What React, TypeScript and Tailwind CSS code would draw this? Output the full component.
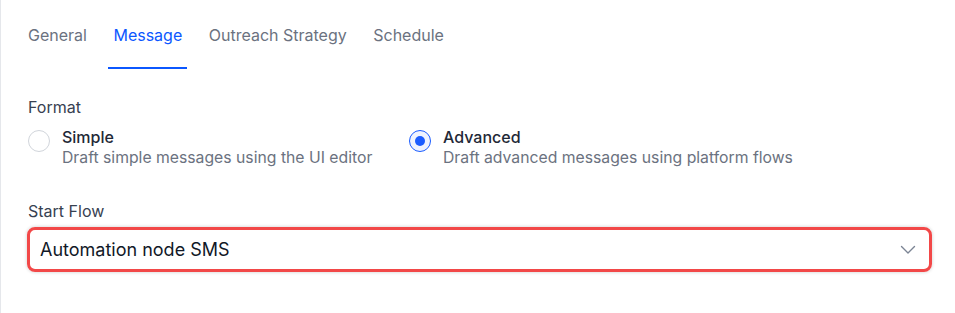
import React from "react";

const font = { fontFamily: "Inter, 'Noto Sans', sans-serif" };

export default function App() {
  const tabs = ["General", "Message", "Outreach Strategy", "Schedule"];
  return (
    <div
      className="w-[955px] h-[313px] bg-white border-l border-gray-200 pl-[27px] pr-[23px] overflow-hidden"
      style={font}
    >
      <div className="flex gap-[16.5px] -ml-[5px]">
        {tabs.map((t) => (
          <div
            key={t}
            className={
              t === "Message"
                ? "px-[5px] pt-[25px] pb-[22px] border-b-2 border-[#0b57ff] text-[#0b57ff] text-[16px] leading-5"
                : "px-[5px] pt-[25px] pb-[22px] border-b-2 border-transparent text-[#6b7280] text-[16px] leading-5"
            }
          >
            {t}
          </div>
        ))}
      </div>

      <div className="mt-[28px] text-[16px] leading-5 text-[#374151]">Format</div>

      <div className="flex mt-[10px]">
        <div className="w-[381px] flex gap-3">
          <div className="mt-[3px] w-[22px] h-[22px] rounded-full border border-[#d1d5db] bg-white shrink-0" />
          <div>
            <div className="text-[16px] leading-5 font-medium text-[#1f2937]">Simple</div>
            <div className="text-[15.75px] leading-5 mt-px text-[#6b7280]">
              Draft simple messages using the UI editor
            </div>
          </div>
        </div>
        <div className="flex gap-3">
          <div className="mt-[3px] w-[22px] h-[22px] rounded-full border-[1.5px] border-[#1a5cff] bg-[#eef3ff] shrink-0 flex items-center justify-center">
            <div className="w-[10px] h-[10px] rounded-full bg-[#1a5cff]" />
          </div>
          <div>
            <div className="text-[16px] leading-5 font-medium text-[#1f2937]">Advanced</div>
            <div className="text-[15.75px] leading-5 mt-px text-[#6b7280]">
              Draft advanced messages using platform flows
            </div>
          </div>
        </div>
      </div>

      <div className="mt-[33px] text-[16px] leading-5 text-[#374151]">Start Flow</div>

      <div className="mt-[6px] -ml-px h-[45px] rounded-lg border-[3px] border-[#f24848] shadow-[0_0_3px_1px_rgba(0,0,0,0.12)] flex items-center justify-between pl-[10px] pr-[12px]">
        <span className="text-[18px] text-[#111827]">Automation node SMS</span>
        <svg width="16" height="10" viewBox="0 0 16 10" fill="none" className="mr-[1px]">
          <path d="M1.5 1.5 L8 8 L14.5 1.5" stroke="#7b8494" strokeWidth="1.4" strokeLinecap="round" strokeLinejoin="round" />
        </svg>
      </div>
    </div>
  );
}
